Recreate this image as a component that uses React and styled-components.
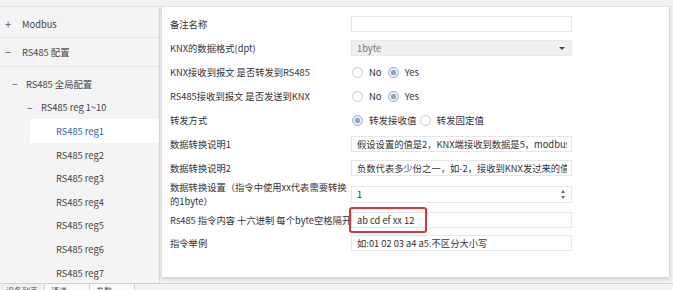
import React from 'react';
import styled, { createGlobalStyle } from 'styled-components';

const GlobalStyle = createGlobalStyle`
  html, body {
    margin: 0;
    padding: 0;
    background: #f3f3f3;
  }
  body {
    font-family: "Noto Sans CJK SC", "Noto Sans", sans-serif;
    font-size: 9.3px;
    color: #333;
  }
  * {
    box-sizing: border-box;
  }
`;

const TREE = [
  { level: 1, icon: '−', label: 'RS485 全局配置' },
  { level: 2, icon: '−', label: 'RS485 reg 1~10' },
  { level: 3, label: 'RS485 reg1', selected: true },
  { level: 3, label: 'RS485 reg2' },
  { level: 3, label: 'RS485 reg3' },
  { level: 3, label: 'RS485 reg4' },
  { level: 3, label: 'RS485 reg5' },
  { level: 3, label: 'RS485 reg6' },
  { level: 3, label: 'RS485 reg7' },
];

function Radio({ checked, children }) {
  return (
    <RadioOption>
      <RadioCircle $checked={checked} />
      <span>{children}</span>
    </RadioOption>
  );
}

function Field({ children, height, extra, muted }) {
  return (
    <Input $height={height} $muted={muted}>
      <InputText>{children}</InputText>
      {extra}
    </Input>
  );
}

function App() {
  return (
    <Root>
      <GlobalStyle />
      <TopStrip />
      <Main>
        <Sidebar>
          <GroupRow $height={28}>
            <GroupIcon>+</GroupIcon>
            Modbus
          </GroupRow>
          <GroupRow $height={29}>
            <GroupIcon>−</GroupIcon>
            RS485 配置
          </GroupRow>
          <TreeList>
            {TREE.map((item) => (
              <TreeItem key={item.label} $level={item.level} $selected={item.selected}>
                {item.icon && <TreeIcon>{item.icon}</TreeIcon>}
                {item.label}
              </TreeItem>
            ))}
          </TreeList>
        </Sidebar>

        <ContentArea>
          <Panel>
            <FormRow>
              <Label>备注名称</Label>
              <Field />
            </FormRow>
            <FormRow>
              <Label>KNX的数据格式(dpt)</Label>
              <Field muted extra={<Caret />}>
                1byte
              </Field>
            </FormRow>
            <FormRow>
              <Label>KNX接收到报文 是否转发到RS485</Label>
              <RadioGroup>
                <Radio>No</Radio>
                <Radio checked>Yes</Radio>
              </RadioGroup>
            </FormRow>
            <FormRow>
              <Label>RS485接收到报文 是否发送到KNX</Label>
              <RadioGroup>
                <Radio>No</Radio>
                <Radio checked>Yes</Radio>
              </RadioGroup>
            </FormRow>
            <FormRow>
              <Label>转发方式</Label>
              <RadioGroup $gap={3}>
                <Radio checked>转发接收值</Radio>
                <Radio>转发固定值</Radio>
              </RadioGroup>
            </FormRow>
            <FormRow>
              <Label>数据转换说明1</Label>
              <Field>假设设置的值是2，KNX端接收到数据是5，modbus端接收到的数据</Field>
            </FormRow>
            <FormRow>
              <Label>数据转换说明2</Label>
              <Field>负数代表多少份之一，如-2，接收到KNX发过来的值是10</Field>
            </FormRow>
            <FormRow $height={28}>
              <Label>
                数据转换设置（指令中使用xx代表需要转换
                <br />
                的1byte）
              </Label>
              <Field
                height={17}
                extra={
                  <Spinner>
                    <SpinArrow $up />
                    <SpinArrow />
                  </Spinner>
                }
              >
                1
              </Field>
            </FormRow>
            <FormRow>
              <Label>Rs485 指令内容 十六进制 每个byte空格隔开</Label>
              <Field extra={<Highlight />}>ab cd ef xx 12</Field>
            </FormRow>
            <FormRow $height={22}>
              <Label>指令举例</Label>
              <Field>如:01 02 03 a4 a5.不区分大小写</Field>
            </FormRow>
          </Panel>
        </ContentArea>
      </Main>
      <TabBar>
        <Tab>设备列表</Tab>
        <Tab $active>通道</Tab>
        <Tab $active>参数</Tab>
      </TabBar>
    </Root>
  );
}

const Root = styled.div`
  width: 673px;
  height: 290px;
  overflow: hidden;
  display: flex;
  flex-direction: column;
  background: #f3f3f3;
`;

const TopStrip = styled.div`
  height: 7px;
  flex-shrink: 0;
  background: #f1f1f1;
  border-bottom: 1px solid #e4e4e4;
`;

const Main = styled.div`
  height: 276px;
  flex-shrink: 0;
  display: flex;
`;

const Sidebar = styled.nav`
  width: 160px;
  flex-shrink: 0;
  overflow: hidden;
  background: #f4f4f4;
  border-right: 1px solid #dcdcdc;
  color: #444;
  padding-top: 3px;
`;

const GroupRow = styled.div`
  height: ${(p) => p.$height}px;
  display: flex;
  align-items: center;
  border-bottom: 1px solid #e3e3e3;
  padding-left: 5px;
`;

const GroupIcon = styled.span`
  width: 17px;
  font-size: 11px;
  color: #555;
`;

const TreeList = styled.ul`
  list-style: none;
  margin: 0;
  padding: 5px 0 0;
`;

const TreeItem = styled.li`
  height: 23.6px;
  display: flex;
  align-items: center;
  padding-left: ${(p) => (p.$level === 3 ? 26 : 12 + (p.$level - 1) * 15)}px;
  margin-left: ${(p) => (p.$level === 3 ? 30 : 0)}px;
  background: ${(p) => (p.$selected ? '#fff' : 'transparent')};
  color: ${(p) => (p.$selected ? '#2d68a6' : '#444')};
`;

const TreeIcon = styled.span`
  width: 14px;
  font-size: 10px;
  color: #555;
`;

const ContentArea = styled.main`
  flex: 1;
  padding: 0 3px 6px 1px;
  display: flex;
`;

const Panel = styled.section`
  flex: 1;
  background: #fff;
  border-left: 1px solid #dedede;
  border-right: 1px solid #d6d6d6;
  box-shadow: 0 2px 4px rgba(0, 0, 0, 0.15);
  padding: 5px 0 0 8px;
`;

const FormRow = styled.div`
  height: ${(p) => p.$height || 24}px;
  display: flex;
  align-items: center;
`;

const Label = styled.label`
  width: 181px;
  flex-shrink: 0;
  line-height: 14px;
  color: #333;
  white-space: nowrap;
  overflow: hidden;
`;

const Input = styled.div`
  position: relative;
  width: 221px;
  height: ${(p) => p.$height || 16}px;
  border: 1px solid ${(p) => (p.$muted ? '#e8e8e8' : '#e6e6e6')};
  background: ${(p) => (p.$muted ? '#f0f0f0' : '#fff')};
  color: ${(p) => (p.$muted ? '#777' : '#333')};
  display: flex;
  align-items: center;
  padding: 0 4px 0 5px;
`;

const InputText = styled.span`
  flex: 1;
  overflow: hidden;
  white-space: nowrap;
`;

const Caret = styled.span`
  position: absolute;
  right: 6px;
  top: 6px;
  border-left: 3px solid transparent;
  border-right: 3px solid transparent;
  border-top: 3px solid #444;
`;

const Spinner = styled.span`
  position: absolute;
  right: 6px;
  top: 3px;
  display: flex;
  flex-direction: column;
  gap: 3px;
`;

const SpinArrow = styled.span`
  border-left: 2px solid transparent;
  border-right: 2px solid transparent;
  ${(p) => (p.$up ? 'border-bottom: 3px solid #666;' : 'border-top: 3px solid #666;')}
`;

const Highlight = styled.span`
  position: absolute;
  left: -3px;
  top: -6px;
  width: 78px;
  height: 26px;
  border: 2px solid #d8353b;
  border-radius: 3px;
`;

const RadioGroup = styled.div`
  display: flex;
  align-items: center;
  gap: ${(p) => p.$gap || 6}px;
  padding-left: 1px;
`;

const RadioOption = styled.span`
  display: flex;
  align-items: center;
  gap: 6px;
  font-size: 9.5px;
`;

const RadioCircle = styled.span`
  width: 11px;
  height: 11px;
  border-radius: 50%;
  border: 1px solid ${(p) => (p.$checked ? '#9fb1c4' : '#c8c8c8')};
  background: ${(p) => (p.$checked ? '#e4ecf4' : '#fff')};
  display: flex;
  align-items: center;
  justify-content: center;

  &::after {
    content: '';
    width: 5px;
    height: 5px;
    border-radius: 50%;
    background: ${(p) => (p.$checked ? '#8aa1ba' : 'transparent')};
  }
`;

const TabBar = styled.footer`
  flex: 1;
  display: flex;
  border-top: 1px solid #cfcfcf;
  background: #f3f3f3;
`;

const Tab = styled.div`
  width: 45px;
  padding: 1px 0 0 6px;
  font-size: 8px;
  color: #555;
  border-right: 1px solid #d0d0d0;
  background: ${(p) => (p.$active ? '#fafafa' : '#f0f0f0')};
`;

export default App;
